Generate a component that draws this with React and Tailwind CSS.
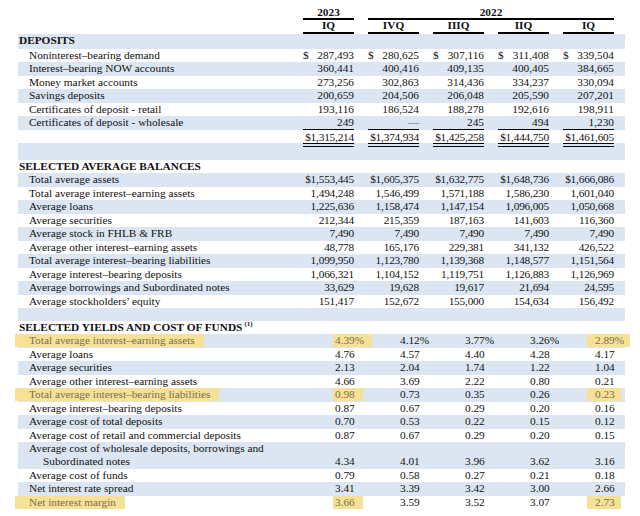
const blue = "bg-[#dce6f2]"

const deposits = [
  ["Noninterest–bearing demand", ["287,493", "280,625", "307,116", "311,408", "339,504"], true],
  ["Interest–bearing NOW accounts", ["360,441", "400,416", "409,135", "400,405", "384,665"]],
  ["Money market accounts", ["273,256", "302,863", "314,436", "334,237", "330,094"]],
  ["Savings deposits", ["200,659", "204,506", "206,048", "205,590", "207,201"]],
  ["Certificates of deposit - retail", ["193,116", "186,524", "188,278", "192,616", "198,911"]],
  ["Certificates of deposit - wholesale", ["249", "—", "245", "494", "1,230"]],
]

const totals = ["$1,315,214", "$1,374,934", "$1,425,258", "$1,444,750", "$1,461,605"]

const balances = [
  ["Total average assets", ["$1,553,445", "$1,605,375", "$1,632,775", "$1,648,736", "$1,666,086"]],
  ["Total average interest–earning assets", ["1,494,248", "1,546,499", "1,571,188", "1,586,230", "1,601,040"]],
  ["Average loans", ["1,225,636", "1,158,474", "1,147,154", "1,096,005", "1,050,668"]],
  ["Average securities", ["212,344", "215,359", "187,163", "141,603", "116,360"]],
  ["Average stock in FHLB & FRB", ["7,490", "7,490", "7,490", "7,490", "7,490"]],
  ["Average other interest–earning assets", ["48,778", "165,176", "229,381", "341,132", "426,522"]],
  ["Total average interest–bearing liabilities", ["1,099,950", "1,123,780", "1,139,368", "1,148,577", "1,151,564"]],
  ["Average interest–bearing deposits", ["1,066,321", "1,104,152", "1,119,751", "1,126,883", "1,126,969"]],
  ["Average borrowings and Subordinated notes", ["33,629", "19,628", "19,617", "21,694", "24,595"]],
  ["Average stockholders’ equity", ["151,417", "152,672", "155,000", "154,634", "156,492"]],
]

const yields = [
  ["Total average interest–earning assets", ["4.39%", "4.12%", "3.77%", "3.26%", "2.89%"], true],
  ["Average loans", ["4.76", "4.57", "4.40", "4.28", "4.17"]],
  ["Average securities", ["2.13", "2.04", "1.74", "1.22", "1.04"]],
  ["Average other interest–earning assets", ["4.66", "3.69", "2.22", "0.80", "0.21"]],
  ["Total average interest–bearing liabilities", ["0.98", "0.73", "0.35", "0.26", "0.23"], true],
  ["Average interest–bearing deposits", ["0.87", "0.67", "0.29", "0.20", "0.16"]],
  ["Average cost of total deposits", ["0.70", "0.53", "0.22", "0.15", "0.12"]],
  ["Average cost of retail and commercial deposits", ["0.87", "0.67", "0.29", "0.20", "0.15"]],
  ["wholesale", ["4.34", "4.01", "3.96", "3.62", "3.16"]],
  ["Average cost of funds", ["0.79", "0.58", "0.27", "0.21", "0.18"]],
  ["Net interest rate spread", ["3.41", "3.39", "3.42", "3.00", "2.66"]],
  ["Net interest margin", ["3.66", "3.59", "3.52", "3.07", "2.73"], true],
]

const Row = ({ shaded, children, tall, top }) => (
  <div className={`flex ${tall ? "h-[26.5px] items-end" : top ? "h-[13.5px] items-start" : "h-[13.5px] items-center"} ${shaded ? blue : ""}`}>
    {children}
  </div>
)

const Label = ({ children, mark }) => (
  <div className="w-[285px] shrink-0 pl-[11px] whitespace-nowrap">
    {mark ? (
      <span className="inline-block -ml-[14px] pl-[14px] pr-[9px] h-[13px] bg-[#f6e196] text-[#77724f]">{children}</span>
    ) : children}
  </div>
)

const Cells = ({ children }) => <div className="flex gap-[14px]">{children}</div>

const YieldVal = ({ v, mark, last }) => {
  const hl = last
    ? "inline-block h-[13px] bg-[#f6e196] text-[#77724f] pl-[8px] -ml-[8px] pr-[6px] -mr-[6px]"
    : "inline-block h-[13px] bg-[#f6e196] text-[#77724f] pl-[2px] -ml-[2px] pr-[8px] -mr-[8px]"
  return (
    <div className="w-[51px] text-left pl-[32px] whitespace-nowrap">
      <span className={mark ? hl : ""}>{v}</span>
    </div>
  )
}

export default function App() {
  return (
    <div className="w-[640px] h-[516px] bg-white text-[#111] overflow-hidden text-[11.3px] leading-[13.5px] font-['Liberation_Serif',serif]">
      <div className="ml-[18px] w-[607px]">
        {/* years */}
        <div className="flex h-[20px] items-end font-bold">
          <div className="w-[285px] shrink-0" />
          <div className="flex gap-[14px]">
            <div className="w-[51px] text-center border-b-2 border-black leading-[12px]">2023</div>
            <div className="w-[246px] text-center border-b-2 border-black leading-[12px]">2022</div>
          </div>
        </div>
        <div className="flex h-[13.5px] items-end font-bold">
          <div className="w-[285px] shrink-0" />
          <Cells>
            {["IQ", "IVQ", "IIIQ", "IIQ", "IQ"].map((q, i) => (
              <div key={i} className="w-[51px] text-center border-b-2 border-black leading-[11.5px]">{q}</div>
            ))}
          </Cells>
        </div>

        {/* deposits */}
        <div className={`h-[15px] flex items-center pl-[1px] font-bold ${blue}`}>DEPOSITS</div>
        {deposits.map(([label, vals, dollar], r) => (
          <Row key={label} shaded={r % 2 === 1}>
            <Label>{label}</Label>
            <Cells>
              {vals.map((v, i) => (
                <div key={i} className={`w-[51px] flex justify-between ${r === 5 ? "border-b border-black h-[13.5px]" : ""}`}>
                  <span>{dollar ? "$" : ""}</span>
                  <span className={v === "—" ? "text-[#666]" : ""}>{v}</span>
                </div>
              ))}
            </Cells>
          </Row>
        ))}
        <Row top>
          <Label />
          <Cells>
            {totals.map((v, i) => (
              <div key={i} className="w-[51px] pt-[1px] text-right border-b-[4px] border-double border-black leading-[12px] tracking-[-0.2px]">{v}</div>
            ))}
          </Cells>
        </Row>
        <div className={`h-[16.5px] ${blue}`} />

        {/* balances */}
        <div className="h-[13.5px] flex items-center pl-[1px] font-bold">SELECTED AVERAGE BALANCES</div>
        {balances.map(([label, vals], r) => (
          <Row key={label} shaded={r % 2 === 0}>
            <Label>{label}</Label>
            <Cells>
              {vals.map((v, i) => (
                <div key={i} className="w-[51px] text-right tracking-[-0.2px]">{v}</div>
              ))}
            </Cells>
          </Row>
        ))}
        <div className={`h-[13px] ${blue}`} />

        {/* yields */}
        <div className="h-[13px] flex items-center pl-[1px] font-bold">
          SELECTED YIELDS AND COST OF FUNDS
          <sup className="ml-[2px] text-[7px] font-bold">(1)</sup>
        </div>
        {yields.map(([label, vals, mark], r) => (
          <Row key={label} shaded={r % 2 === 0} tall={label === "wholesale"}>
            {label === "wholesale" ? (
              <div className="w-[285px] shrink-0 pl-[11px] whitespace-nowrap">
                <div>Average cost of wholesale deposits, borrowings and</div>
                <div className="pl-[14px]">Subordinated notes</div>
              </div>
            ) : (
              <Label mark={mark}>{label}</Label>
            )}
            <Cells>
              {vals.map((v, i) => (
                <YieldVal key={i} v={v} mark={mark && (i === 0 || i === 4)} last={i === 4} />
              ))}
            </Cells>
          </Row>
        ))}
      </div>
    </div>
  )
}
